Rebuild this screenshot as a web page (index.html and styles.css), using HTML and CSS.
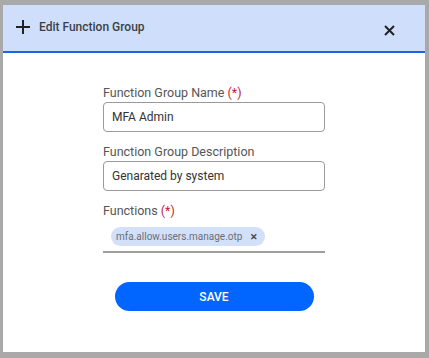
FILE: index.html
```html
<!DOCTYPE html>
<html lang="en">
<head>
    <meta charset="UTF-8">
    <meta name="viewport" content="width=device-width, initial-scale=1.0">
    <title>Edit Function Group</title>
    <link rel="stylesheet" href="styles.css">
</head>
<body>
<div class="dialog">
    <div class="dialog-header">
        <svg class="plus-icon" width="14" height="14" viewBox="0 0 14 14">
            <path d="M7 0v14M0 7h14" stroke="#222" stroke-width="2"/>
        </svg>
        <span class="dialog-title">Edit Function Group</span>
        <svg class="close-icon" width="11" height="11" viewBox="0 0 11 11">
            <path d="M1 1l9 9M10 1l-9 9" stroke="#222" stroke-width="2"/>
        </svg>
    </div>

    <form class="dialog-body">
        <label for="groupName">Function Group Name <span class="req">(*)</span></label>
        <input type="text" id="groupName" value="MFA Admin">

        <label for="groupDesc">Function Group Description</label>
        <input type="text" id="groupDesc" value="Genarated by system">

        <label>Functions <span class="req">(*)</span></label>
        <div class="chip-field">
            <span class="chip">mfa.allow.users.manage.otp <span class="chip-x">&#x2715;</span></span>
        </div>

        <button type="button" class="save-btn">SAVE</button>
    </form>
</div>
</body>
</html>
```

FILE: styles.css
```css
body {
    font-family: Roboto, "Liberation Sans", sans-serif;
    background-color: #a9a9a9;
    margin: 0;
    padding: 5px 4px 6px 3px;
}

.dialog {
    background-color: #ffffff;
    height: 347px;
}

.dialog-header {
    height: 46px;
    background-color: #cfdffb;
    border-bottom: 2px solid #1a66e0;
    display: flex;
    align-items: center;
    padding: 0 30px 0 13px;
}

.plus-icon {
    margin-top: -2px;
}

.dialog-title {
    margin-left: 9px;
    margin-top: -2px;
    font-size: 12px;
    font-weight: 500;
    color: #3a3f47;
    flex: 1;
}

.close-icon {
    margin-top: 4px;
}

.dialog-body {
    width: 222px;
    margin: 0 auto;
    padding-top: 32px;
    display: flex;
    flex-direction: column;
}

label {
    font-size: 12.5px;
    color: #555;
    margin-bottom: 2px;
}

.req {
    color: #c0243a;
}

input {
    height: 30px;
    box-sizing: border-box;
    padding: 0 8px;
    border: 1px solid #9a9a9a;
    border-radius: 4px;
    font-family: inherit;
    font-size: 12px;
    color: #333;
    margin-bottom: 12px;
}

.chip-field {
    border-bottom: 2px solid #9e9e9e;
    padding: 5px 0 5px 8px;
}

.chip {
    display: inline-flex;
    align-items: center;
    height: 19px;
    padding: 0 7px 0 5px;
    background-color: #d2e0fa;
    border-radius: 10px;
    font-size: 10px;
    color: #6b6f75;
}

.chip-x {
    margin-left: 8px;
    font-size: 9px;
    font-weight: bold;
    color: #444;
}

.save-btn {
    width: 199px;
    height: 29px;
    margin: 29px auto 0;
    background-color: #0066ff;
    color: white;
    border: none;
    border-radius: 15px;
    font-family: inherit;
    font-size: 12px;
    font-weight: 500;
    cursor: pointer;
}
```
